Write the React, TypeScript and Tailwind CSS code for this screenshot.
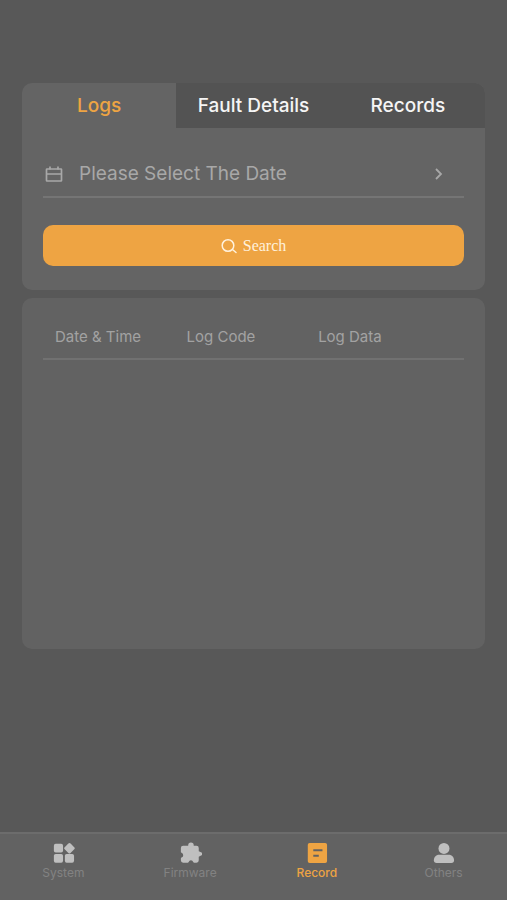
import { useState } from "react";
import type { ReactNode } from "react";

const tabs = ["Logs", "Fault Details", "Records"];
const columns = ["Date & Time", "Log Code", "Log Data"];

type NavItem = {
  label: string;
  icon: ReactNode;
};

const navItems: NavItem[] = [
  {
    label: "System",
    icon: (
      <>
        <rect x="2" y="2" width="10" height="9.5" rx="2" />
        <rect x="2" y="13" width="10" height="9.5" rx="2" />
        <rect x="14" y="13" width="10" height="9.5" rx="2" />
        <path d="M17.8 1.7a1.7 1.7 0 0 1 2.4 0l4 4a1.500 1.500 0 0 1 0 2.200l-4 4a1.700 1.700 0 0 1-2.400 0l-4-4a1.500 1.500 0 0 1 0-2.200z" />
      </>
    ),
  },
  {
    label: "Firmware",
    icon: (
      <path d="M4.500 4H10V3.500a3 3 0 0 1 6 0V4h3a2.500 2.500 0 0 1 2.500 2.500V10l3 1.500a1.600 1.600 0 0 1 0 3l-3 1.500v4a2.500 2.500 0 0 1-2.500 2.500h-2.500c-.5 0-.8-.3-1-.8a2.700 2.700 0 0 0-5 0c-.2.500-.5.800-1 .800H4.500A2.500 2.500 0 0 1 2 20v-2c0-.5.300-.8.800-1a2.800 2.800 0 0 0 0-5.200c-.5-.2-.8-.5-.8-1V6.500A2.500 2.500 0 0 1 4.500 4z" />
    ),
  },
  {
    label: "Record",
    icon: (
      <path
        fillRule="evenodd"
        d="M5 1h17a2 2 0 0 1 2 2v18a2 2 0 0 1-2 2H5a2 2 0 0 1-2-2V3a2 2 0 0 1 2-2zM9 8v2h10V8zM9 14v2h6v-2z"
      />
    ),
  },
  {
    label: "Others",
    icon: (
      <>
        <circle cx="13" cy="7" r="6" />
        <path d="M8 14h10c4 0 6 3 6 6a3 3 0 0 1-3 3H5a3 3 0 0 1-3-3c0-3 2-6 6-6z" />
      </>
    ),
  },
];

function CalendarIcon() {
  return (
    <svg viewBox="0 0 18 18" className="size-[18px]" fill="none" stroke="currentColor" strokeWidth="1.7" aria-hidden="true">
      <rect x="1.5" y="4" width="15" height="12" rx="0.5" />
      <path d="M2 9h14M5 1.5v3M13 1.5v3" />
    </svg>
  );
}

function SearchIcon() {
  return (
    <svg viewBox="0 0 16 16" className="size-4" fill="none" stroke="currentColor" strokeWidth="1.5" strokeLinecap="round" aria-hidden="true">
      <circle cx="7" cy="7.5" r="5.8" />
      <path d="M11.5 11.5l3.500 3" />
    </svg>
  );
}

export default function App() {
  const [activeTab, setActiveTab] = useState("Logs");
  const [activeNav, setActiveNav] = useState("Record");

  return (
    <div className="flex min-h-screen flex-col bg-[#585858] font-['Inter',sans-serif]">
      <main className="flex flex-1 flex-col gap-2 px-[22px] pt-[83px]">
        <section className="overflow-hidden rounded-[10px] bg-[#646464]">
          <div role="tablist" aria-label="Record type" className="grid grid-cols-3">
            {tabs.map((tab) => (
              <button
                key={tab}
                type="button"
                role="tab"
                aria-selected={tab === activeTab}
                onClick={() => setActiveTab(tab)}
                className={`h-[45px] pt-0.5 text-[19px] font-medium ${
                  tab === activeTab ? "text-[#eea443]" : "bg-[#535353] text-[#f5f5f5]"
                }`}
              >
                {tab}
              </button>
            ))}
          </div>

          <div className="px-[21px] pt-[22px] pb-6">
            <button type="button" className="flex h-12 w-full items-center border-b-2 border-[#757575] px-0.5 pt-0.5 text-[#a8a8a8]">
              <CalendarIcon />
              <span className="ml-4 flex-1 text-left text-[19px]">Please Select The Date</span>
              <svg viewBox="0 0 14 14" className="mr-4 size-3.5" fill="none" stroke="currentColor" strokeWidth="1.8" aria-hidden="true">
                <path d="M4 2l5 5-5 5" />
              </svg>
            </button>

            <button
              type="button"
              className="mt-[27px] flex h-[41px] w-full items-center justify-center gap-1.5 rounded-[10px] bg-[#eea443] font-['Liberation_Serif',serif] text-[16px] text-[#fff1dc]"
            >
              <SearchIcon />
              Search
            </button>
          </div>
        </section>

        <section className="min-h-[351px] rounded-[10px] bg-[#626262] px-[21px] pt-[18px]">
          <table className="w-full table-fixed border-collapse text-left">
            <thead>
              <tr className="h-[43px] border-b-2 border-[#717171]">
                {columns.map((column) => (
                  <th
                    key={column}
                    scope="col"
                    className="w-5/16 pl-3 text-[15px] font-normal text-[#a2a2a2] last:w-6/16"
                  >
                    {column}
                  </th>
                ))}
              </tr>
            </thead>
            <tbody />
          </table>
        </section>
      </main>

      <nav aria-label="Main" className="grid h-[68px] grid-cols-4 border-t-2 border-[#6c6c6c] bg-[#626262]">
        {navItems.map((item) => {
          const active = item.label === activeNav;
          return (
            <button
              key={item.label}
              type="button"
              aria-current={active ? "page" : undefined}
              onClick={() => setActiveNav(item.label)}
              className={`flex flex-col items-center pt-2 text-[12px] leading-[18px] ${active ? "font-medium text-[#eea443]" : "text-[#828282]"}`}
            >
              <svg viewBox="0 0 25 24" fill="currentColor" className={`h-[22px] w-[23px] ${active ? "" : "text-[#bfbfbf]"}`} aria-hidden="true">
                {item.icon}
              </svg>
              {item.label}
            </button>
          );
        })}
      </nav>
    </div>
  );
}
